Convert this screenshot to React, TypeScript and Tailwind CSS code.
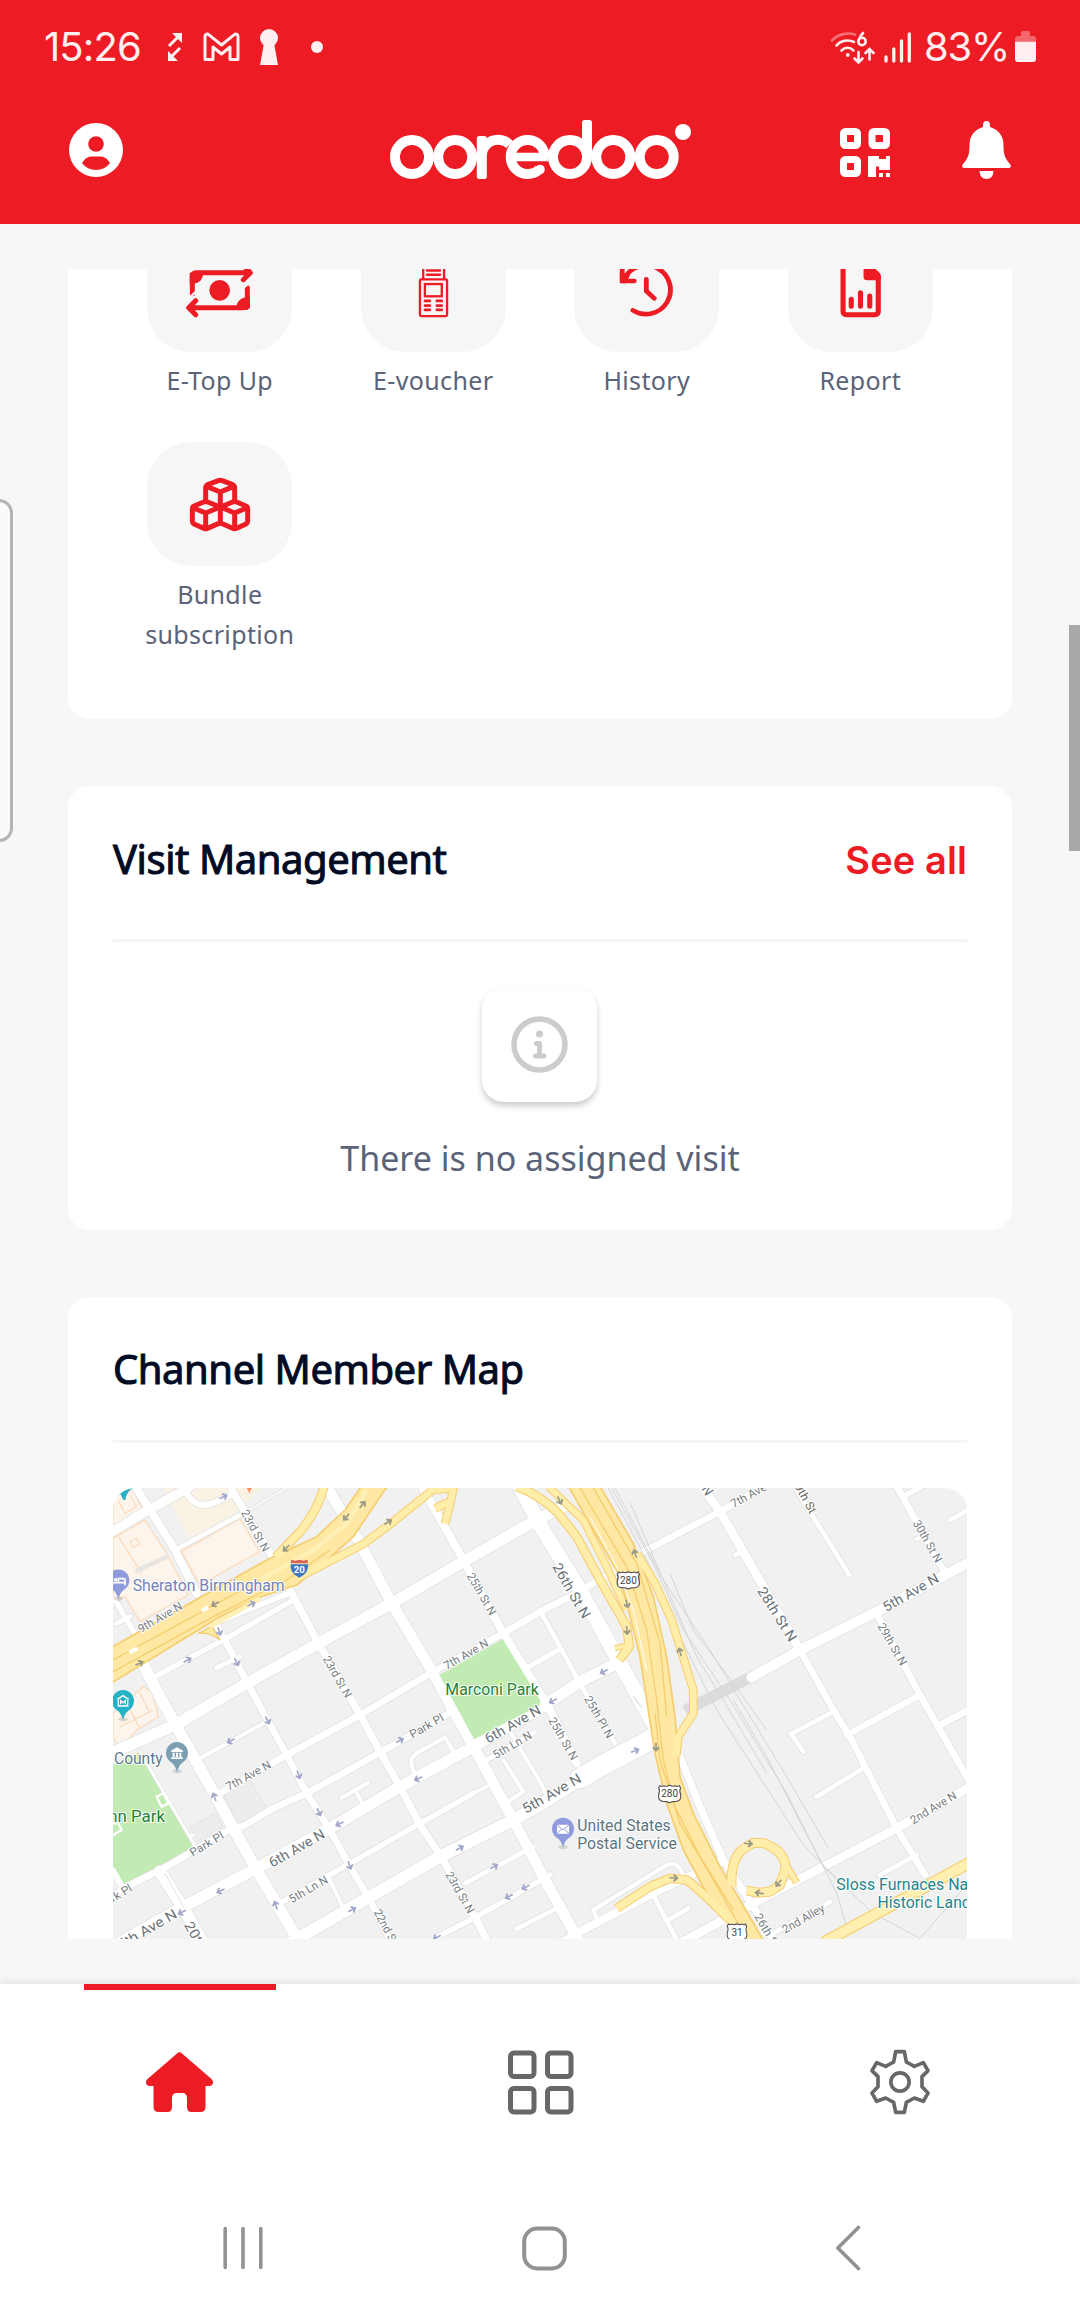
import React from "react";

const RED = "#ed1c24";

/* ---------- status bar ---------- */

function StatusBar() {
  return (
    <div className="flex h-[94px] items-center pl-[44px] pr-[44px] text-[#ffeff0]">
      <span className="w-[100px] whitespace-nowrap font-['Inter'] text-[40px] leading-[48px] tracking-[-0.900px]">15:26</span>
      <svg className="ml-[23px] h-[30px] w-[16px]" viewBox="0 0 16 30" fill="none" stroke="currentColor" strokeWidth="3">
        <path d="M2 14 11 5M13 16 4 25" />
        <path d="M5 1h10v10zM1 29V19l10 10z" fill="currentColor" stroke="none" />
      </svg>
      <svg className="ml-[20px] h-[30px] w-[37px]" viewBox="0 0 37 30" fill="none" stroke="currentColor" strokeWidth="3" strokeLinejoin="round">
        <path d="M2 4.500C2 2 4.500 1.500 6 2.800L18.500 13 31 2.800C32.500 1.500 35 2 35 4.500V27.500H27V15L18.500 22 10 15V27.500H2Z" />
      </svg>
      <svg className="ml-[19px] h-[36px] w-[20px]" viewBox="0 0 20 36" fill="currentColor">
        <circle cx="10" cy="9" r="9" />
        <path d="M5 14h10l4 22H1z" />
      </svg>
      <span className="ml-[32px] h-[12px] w-[12px] rounded-full bg-[#ffeff0]" />
      <svg className="ml-auto h-[33px] w-[45px]" viewBox="0 0 45 33" fill="none" stroke="currentColor" strokeWidth="2.600" strokeLinecap="round">
        <path d="M2 9.500C8 3 18 1 25 3.500" opacity="0.4" />
        <path d="M6.500 14.500C10.500 9.500 18 8 24 11M11.500 19.500c3.500-3.600 8.500-3.600 12 0" />
        <circle cx="17.800" cy="24" r="1.900" fill="currentColor" stroke="none" />
        <circle cx="32" cy="10.500" r="3.700" />
        <path d="M29 8.500Q30.500 4.500 33 2M28.500 21v10M24.500 27.500l4 4 4-4M39.500 28.500V18.500M35.500 22l4-4 4 4" />
      </svg>
      <svg className="ml-[9px] h-[33px] w-[28px]" viewBox="0 0 28 33" stroke="currentColor" strokeWidth="3.300" strokeLinecap="round">
        <path d="M2 26v4M9.800 18v12M17.500 10v20M25.300 3v27" />
      </svg>
      <span className="ml-[12px] w-[88px] whitespace-nowrap font-['Inter'] text-[40px] leading-[48px] tracking-[-1.200px]">83%</span>
      <svg className="ml-[3px] h-[32px] w-[21px]" viewBox="0 0 21 32" fill="currentColor">
        <path d="M0 10V8q0-3 3-3h3V2q0-2 2-2h5q2 0 2 2v3h3q3 0 3 3v2z" opacity="0.36" />
        <path d="M0 10.500h21V28q0 3-3 3H3q-3 0-3-3z" />
      </svg>
    </div>
  );
}

/* ---------- brand header ---------- */

function Logo() {
  return (
    <svg aria-label="ooredoo" className="h-[62px] w-[304px]" viewBox="388 119 304 62" fill="none" stroke="#fff" strokeWidth="10">
      <circle cx="412" cy="157" r="17" />
      <circle cx="455.200" cy="157" r="17" />
      <rect x="476.800" y="136" width="10" height="43" rx="2.500" fill="#fff" stroke="none" />
      <circle cx="498" cy="156" r="16.200" strokeDasharray="38 200" transform="rotate(180 498 156)" />
      <circle cx="527.700" cy="157" r="17" strokeDasharray="93 200" transform="rotate(47 527.700 157)" />
      <line x1="512" x2="548.300" y1="157" y2="157" strokeWidth="8.500" />
      <circle cx="540" cy="169.500" r="4.800" fill="#fff" stroke="none" />
      <circle cx="570" cy="157" r="17" />
      <rect x="582" y="120" width="10" height="38" rx="2.500" fill="#fff" stroke="none" />
      <circle cx="613.300" cy="157" r="17" />
      <circle cx="656.700" cy="157" r="17" />
      <circle cx="683" cy="132" r="8" fill="#fff" stroke="none" />
    </svg>
  );
}

function BrandBar() {
  return (
    <div className="flex h-[130px] pl-[69px] pr-[69px]">
      <svg className="mt-[29px] h-[54px] w-[54px]" viewBox="0 0 54 54">
        <circle cx="27" cy="27" r="27" fill="#fff" />
        <circle cx="27" cy="21" r="7.800" fill={RED} />
        <path d="M13 40q4-6.500 9-6.500h10q5 0 9 6.500-5 7-14 7t-14-7Z" fill={RED} />
      </svg>
      <div className="ml-[265px] mt-[25px]">
        <Logo />
      </div>
      <svg className="ml-auto mt-[34px] h-[49px] w-[50px]" viewBox="0 0 50 49" fill="none" stroke="#fff" strokeWidth="7">
        <rect x="3.500" y="3.500" width="14" height="14" rx="2" />
        <rect x="32" y="3.500" width="14.500" height="14" rx="2" />
        <rect x="3.500" y="31.500" width="14" height="14" rx="2" />
        <path d="M28 28h11v3h7v-3h4v14H39v-3.500h-3V49h-8zM39 45h4v4h-4zM46 45h4v4h-4z" fill="#fff" stroke="none" />
      </svg>
      <svg className="ml-[72px] mt-[27px] h-[58px] w-[49px]" viewBox="0 0 49 58" fill="#fff">
        <path d="M21 6V4a3.500 4 0 0 1 7 0V6C37 9 41.500 15 41.500 24C41.500 34 43 37 47.500 42.500C50.500 46 48 47 46 47H3C1 47-1.500 46 1.500 42.500C6 37 7.500 34 7.500 24C7.500 15 12 9 21 6Z" />
        <path d="M17.500 50h14q-.5 8-7 8t-7-8Z" />
      </svg>
    </div>
  );
}

/* ---------- shortcuts ---------- */

function TopUpIcon() {
  return (
    <svg className="h-full w-full" viewBox="261 -37 435 372" fill="none" stroke={RED} strokeWidth="15" strokeLinecap="round" strokeLinejoin="round">
      <path d="M397 160V109Q397 97 409 97H570M550 118 571 97 555 81M562 142V190Q562 202 550 202H388M407 181 386 202 407 223" />
      <path d="M389 97H430Q429 129 397 130H389ZM570 202V170Q528 170 528 209H562Z" fill={RED} stroke="none" />
      <path d="M385 176 406 155M548 146 571 124" stroke="#f6f6f6" strokeWidth="6" />
      <circle cx="479" cy="150" r="31" fill={RED} stroke="none" />
    </svg>
  );
}

function VoucherIcon() {
  return (
    <svg className="h-full w-full" viewBox="900 -37 438 372" fill="none" stroke={RED} strokeWidth="7" strokeLinecap="round">
      <path d="M1088 114V60H1151V114M1099 90H1139M1099 103H1139" />
      <rect x="1078" y="117" width="82" height="111" rx="4" />
      <rect x="1093" y="131" width="51" height="37" />
      <path d="M1093 182h15M1129 182h15M1093 196h15M1129 196h15M1093 209h15M1129 209h15" strokeWidth="8" />
    </svg>
  );
}

function HistoryIcon() {
  return (
    <svg className="h-full w-full" viewBox="99 -37 421 372" preserveAspectRatio="none" fill="none" stroke={RED} strokeWidth="14" strokeLinecap="round" strokeLinejoin="round">
      <path d="M270 210A71 73 0 1 0 247 111M309 117V152L332 174" />
      <path d="M239 75V122H274" />
      <path d="M232 95V129H250L262 104Z" fill={RED} stroke="none" />
    </svg>
  );
}

function ReportIcon() {
  return (
    <svg className="h-full w-full" viewBox="717 -37 424 372" preserveAspectRatio="none" fill="none" stroke={RED} strokeWidth="15" strokeLinecap="round">
      <path d="M950 76H878V213Q878 223 888 223H971Q981 223 981 213V110Q981 103 975 98L955 80" />
      <path d="M938 75H960L988 105V120H948Q938 120 938 110Z" fill={RED} stroke="none" />
      <path d="M902 177V198M929 157V198M956 167V198" />
    </svg>
  );
}

function CubesIcon() {
  return (
    <svg className="h-full w-full" viewBox="261 605 435 372" fill="none" stroke={RED} strokeWidth="15" strokeLinejoin="round">
      <path d="M437 785V742Q437 736 443 733L475 721Q481 718 487 721L518 733Q524 736 524 742V785M440 738 481 755 521 738M481 755V850" />
      <path d="M481 800 443 785Q437 783 431 785L402 797Q397 799 397 805V842Q397 848 402 851L432 864Q437 867 442 864L475 850Q481 847 487 850L518 864Q524 867 530 864L558 851Q563 848 563 842V805Q563 799 558 797L530 785Q524 783 518 785Z" />
      <path d="M400 803 437 818 481 800 524 818 560 803M437 818V864M524 818V864" />
    </svg>
  );
}

const shortcuts = [
  { label: "E-Top Up", Icon: TopUpIcon },
  { label: "E-voucher", Icon: VoucherIcon },
  { label: "History", Icon: HistoryIcon },
  { label: "Report", Icon: ReportIcon },
  { label: "Bundle subscription", Icon: CubesIcon },
];

function Shortcuts() {
  return (
    <section className="h-[450px] shrink-0 overflow-hidden rounded-b-[22px] bg-white px-[45px]">
      <div className="-mt-[41px] grid grid-cols-4 gap-y-[42px]">
        {shortcuts.map(({ label, Icon }) => (
          <div key={label} className="flex flex-col items-center">
            <div className="h-[124px] w-[145px] overflow-hidden rounded-[44px] bg-[#f6f6f6]">
              <Icon />
            </div>
            <p className="mt-2 w-[160px] text-center text-[25px] leading-[40px] tracking-[0.350px] text-[#5b6378]">{label}</p>
          </div>
        ))}
      </div>
    </section>
  );
}

/* ---------- visits ---------- */

function Title({ children }: { children: React.ReactNode }) {
  return (
    <h2 className="whitespace-nowrap text-[40px] font-normal leading-[54px] tracking-[-0.450px] text-[#020b24] [-webkit-text-stroke:1px_#020b24]">
      {children}
    </h2>
  );
}

function Visits() {
  return (
    <section className="mt-[67px] flex h-[444px] shrink-0 flex-col rounded-[22px] bg-white px-[45px] pt-[46px]">
      <div className="flex items-center justify-between">
        <Title>Visit Management</Title>
        <a className="pt-[3px] font-['Inter'] text-[38px] font-semibold leading-[51px] tracking-[0.100px] text-[#ed1c24]">See all</a>
      </div>
      <div className="mt-[53px] h-[3px] shrink-0 bg-[#f5f5f5]" />
      <div className="mr-[1px] mt-[45px] flex h-[115px] w-[115px] shrink-0 items-center justify-center self-center rounded-[22px] bg-white shadow-[0_4px_6px_rgba(0,0,0,0.2)]">
        <svg className="h-[57px] w-[57px]" viewBox="0 0 57 57" fill="none" stroke="#cccccc" strokeWidth="5.500" strokeLinecap="round" strokeLinejoin="round">
          <circle cx="28.500" cy="28.500" r="25.500" />
          <circle cx="28.500" cy="18" r="3.600" fill="#ccc" stroke="none" />
          <path d="M25.500 27.500h3v12M24.500 40h8.500" strokeWidth="5" />
        </svg>
      </div>
      <p className="mt-[33px] text-center text-[34px] leading-[46px] text-[#5b6378]">There is no assigned visit</p>
    </section>
  );
}

/* ---------- map ---------- */

type Road = [number, string];

const streets: Road[] = [
  [28, "M20 195 148 118 250 62 330 10"],
  [14, "M225 240 420 135"],
  [5, "M420 135 560 54"],
  [18, "M255 62Q280 105 310 105 340 105 400 70"],
  [34, "M20 855 225 765 345 695 440 640 655 520 875 400 1090 275 1300 155 1390 110"],
  [20, "M350 975 560 855 780 735 1000 605 1210 490 1330 420 1430 370 1530 310 1630 245 1860 125 2000 45"],
  [20, "M20 1290 80 1250 200 1190 395 1075 430 1068 520 1015 620 970 840 848 1050 728"],
  [16, "M1270 600 1375 540"],
  [34, "M20 1440 250 1310 470 1195 690 1075 900 950 1120 830 1320 715 1440 635 1560 575"],
  [16, "M530 1305 750 1180 960 1060 1120 970"],
  [10, "M1115 972 1180 940"],
  [12, "M685 1220 735 1325"],
  [14, "M1160 870 1305 785"],
  [36, "M560 1425 810 1280 1020 1160 1240 1050 1320 1005 1440 930 1650 815"],
  [60, "M1440 925 1500 890 1660 805"],
  [30, "M1955 622 2100 540 2340 420 2620 270"],
  [16, "M1000 1407 1130 1340 1350 1215"],
  [14, "M1095 1240 1300 1130"],
  [14, "M1250 1377 1390 1305"],
  [24, "M1380 1420 1440 1385 1650 1275 1860 1175"],
  [26, "M1740 1420 1960 1300 2180 1185 2390 1075 2620 945"],
  [14, "M2020 1390 2190 1295"],
  [14, "M2110 845 2073 792 2200 725"],
  [14, "M2150 980 2290 895"],
  [14, "M2340 1215 2450 1155"],
  [18, "M2240 795 2460 675"],
  [20, "M2520 765 2620 712"],
  [24, "M100 40 150 120 225 240 290 370"],
  [20, "M345 455 440 635 560 855 620 970 690 1080 750 1190 810 1290 875 1420"],
  [34, "M125 575 180 680 230 770 345 975 400 1075 470 1200 600 1420"],
  [16, "M45 390 110 500"],
  [14, "M50 460 90 440"],
  [8, "M120 845 285 1128"],
  [36, "M180 1205 250 1315 310 1420"],
  [22, "M395 60 520 265"],
  [22, "M565 350 655 520 775 725 840 845 900 950 960 1065 1030 1170 1130 1350 1165 1420"],
  [32, "M675 40 780 220 875 400 1000 610 1120 830 1240 1050 1330 1220 1440 1420"],
  [24, "M960 40 1090 270 1210 490 1290 620 1345 710 1430 880"],
  [12, "M1230 785 1320 935 1345 985"],
  [12, "M1210 870 1270 965 1225 995"],
  [14, "M1325 430 1440 640 1545 820"],
  [44, "M1250 30 1320 165 1440 360 1560 580 1660 760"],
  [22, "M1740 860 1800 1010 1870 1170 1960 1310 2030 1425"],
  [26, "M1800 40 1860 125 2100 540"],
  [20, "M2100 540 2200 720 2250 800 2390 1075 2475 1215"],
  [14, "M2090 60 2248 315"],
  [20, "M2330 430 2460 675 2620 955"],
  [20, "M2385 40 2530 300"],
  [16, "M2410 80 2500 30"],
  [14, "M2550 150 2620 112"],
  [14, "M1905 255 1925 245"],
  [12, "M2450 207 2462 203"],
  [16, "M165 620 370 510 580 390"],
  [14, "M350 593 420 560"],
  [16, "M355 455 570 368"],
  [12, "M300 865 505 752"],
  [12, "M945 910Q920 870 950 850L1035 802 1062 848"],
  [12, "M725 983 805 938M765 960 790 1005"],
  [12, "M1490 1345 1480 1320 1700 1185Q1735 1170 1750 1220"],
  [14, "M1660 1275 1735 1420M1705 1350 1765 1315"],
];

const highways: Road[] = [
  [22, "M527 262 600 185Q655 120 675 40"],
  [20, "M600 320 790 222 880 155 1010 50M985 60 1060 55 1052 95 1035 160M1005 115 1050 95"],
  [22, "M1250 50Q1320 75 1375 130L1430 200 1500 330 1580 470 1588 530 1558 570"],
  [12, "M1545 535 1585 525"],
  [18, "M1345 50 1450 150 1520 290 1580 420"],
  [20, "M1610 250 1665 340 1715 450 1780 660 1780 730 1735 800 1728 860"],
  [24, "M1895 1250Q1890 1175 1925 1140L1960 1118 1995 1120 2030 1140Q2062 1170 2055 1200L2040 1245 2010 1265 1975 1268 1940 1262"],
  [16, "M2058 1185 2090 1238"],
  [22, "M1550 1315 1650 1250 1710 1225 1760 1230Q1790 1250 1900 1360"],
];

const I20 = "M20 540 500 270 650 200 735 120 790 40H868L760 200 660 290 590 345 470 385 360 440 20 648Z";
const US280 =
  "M1400 40 1480 180 1560 320 1620 560 1640 690 1665 850 1700 1000 1750 1140 1820 1270 1880 1350 1930 1420H1995L1920 1290 1860 1190 1780 1030 1740 920 1725 740 1700 560 1660 380 1600 220 1495 40Z";

const laneLines =
  "M39 570 480 330 640 240 710 190M39 605 340 440 560 330 690 240M1440 54 1580 290 1640 480 1670 690 1690 870 1725 1010 1800 1160 1900 1320M1480 54 1610 280 1680 520 1700 740M1665 730 1680 870 1740 1060 1840 1230 1940 1405";

const rails =
  "M1525 54 1640 270 1730 480 1850 720 2110 1125 2235 1250M1535 54 1665 290 1750 480 1890 690 2060 970 2170 1190M1545 54 1690 330 1830 540 1920 690 2060 920 2185 1135M1590 98 1660 260 1790 560 1870 690 2000 910M1710 310 1780 480 1900 640 2000 780M1900 690 2000 860 2170 1190 2210 1270 2240 1370M2170 1190 2320 1330 2460 1405 2600 1245";

type LabelProps = {
  x: number;
  y: number;
  w: number;
  size?: number;
  rot?: number;
  fill?: string;
  children: string;
};

function Label({ x, y, w, size = 35, rot = 0, fill = "#767c81", children }: LabelProps) {
  return (
    <text
      x={x}
      y={y}
      transform={`rotate(${rot} ${x} ${y})`}
      fontSize={size}
      textLength={w}
      lengthAdjust="spacingAndGlyphs"
      fill={fill}
      stroke="#fff"
      strokeWidth="6"
      strokeLinejoin="round"
      paintOrder="stroke"
      textAnchor="middle"
      dominantBaseline="central"
    >
      {children}
    </text>
  );
}

const streetLabels: LabelProps[] = [
  { x: 466, y: 182, w: 138, rot: 61, children: "23rd St N" },
  { x: 180, y: 442, w: 148, rot: -30, children: "9th Ave N" },
  { x: 712, y: 620, w: 138, rot: 60, children: "23rd St N" },
  { x: 1145, y: 372, w: 140, rot: 60, children: "25th St N" },
  { x: 1098, y: 553, w: 148, rot: -30, children: "7th Ave N" },
  { x: 445, y: 917, w: 148, rot: -29, children: "7th Ave N" },
  { x: 980, y: 768, w: 112, rot: -30, children: "Park Pl" },
  { x: 320, y: 1122, w: 112, rot: -31, children: "Park Pl" },
  { x: 45, y: 1280, w: 112, rot: -31, children: "Park Pl" },
  { x: 625, y: 1258, w: 128, rot: -30, children: "5th Ln N" },
  { x: 1237, y: 825, w: 128, rot: -30, children: "5th Ln N" },
  { x: 1080, y: 1267, w: 138, rot: 60, children: "23rd St N" },
  { x: 865, y: 1385, w: 146, rot: 62, children: "22nd St N" },
  { x: 1390, y: 806, w: 142, rot: 60, children: "25th St N" },
  { x: 1497, y: 741, w: 140, rot: 60, children: "25th Pl N" },
  { x: 1960, y: 68, w: 150, rot: -29, children: "7th Ave N" },
  { x: 2112, y: 76, w: 118, rot: 61, fill: "#6b665a", children: "29th St" },
  { x: 2483, y: 214, w: 140, rot: 60, children: "30th St N" },
  { x: 2377, y: 523, w: 140, rot: 60, children: "29th St N" },
  { x: 2500, y: 1013, w: 155, rot: -31, children: "2nd Ave N" },
  { x: 2110, y: 1346, w: 140, rot: -30, children: "2nd Alley" },
  { x: 2010, y: 1398, w: 150, rot: 60, children: "26th St N" },
  { x: 590, y: 1134, w: 186, size: 42, rot: -30, fill: "#6a7379", children: "6th Ave N" },
  { x: 1238, y: 762, w: 186, size: 42, rot: -30, fill: "#6a7379", children: "6th Ave N" },
  { x: 1355, y: 970, w: 196, size: 42, rot: -30, fill: "#6a7379", children: "5th Ave N" },
  { x: 2432, y: 367, w: 186, size: 42, rot: -30, fill: "#6a7379", children: "5th Ave N" },
  { x: 140, y: 1378, w: 200, size: 42, rot: -30, fill: "#6a7379", children: "5th Ave N" },
  { x: 1415, y: 362, w: 184, size: 42, rot: 60, fill: "#6a7379", children: "26th St N" },
  { x: 2032, y: 432, w: 184, size: 42, rot: 58, fill: "#6a7379", children: "28th St N" },
  { x: 1823, y: 60, w: 28, size: 42, rot: 58, fill: "#6a7379", children: "N" },
  { x: 312, y: 1440, w: 190, size: 42, rot: 60, fill: "#6a7379", children: "20th St N" },
];

const arrows: [number, number, number, string][] = [
  [371, 80, -25, "#a3a8c8"], [788, 103, -50, "#9b9a86"], [738, 142, 132, "#9b9a86"], [865, 156, -32, "#9b9a86"],
  [558, 235, 135, "#9b9a86"], [345, 402, 152, "#9b9a86"], [455, 402, -25, "#a3a8c8"], [119, 580, -25, "#9b9a86"],
  [263, 570, -28, "#a3a8c8"], [358, 485, 70, "#a3a8c8"], [410, 577, 62, "#a3a8c8"], [503, 752, 62, "#a3a8c8"],
  [392, 813, 152, "#a3a8c8"], [596, 915, 70, "#a3a8c8"], [657, 1027, 65, "#a3a8c8"], [343, 980, -110, "#a3a8c8"],
  [900, 811, -28, "#a3a8c8"], [954, 926, 155, "#a3a8c8"], [718, 1062, 155, "#a3a8c8"], [749, 1187, 70, "#a3a8c8"],
  [361, 1263, 155, "#a3a8c8"], [245, 1327, 155, "#a3a8c8"], [527, 1305, -110, "#a3a8c8"], [757, 1319, -28, "#a3a8c8"],
  [1080, 1134, -28, "#a3a8c8"], [1183, 1190, -28, "#a3a8c8"], [1226, 1280, 152, "#a3a8c8"], [1276, 1252, 152, "#a3a8c8"],
  [1010, 1402, 152, "#a3a8c8"], [1379, 92, 65, "#9b9a86"], [1605, 250, -110, "#9b9a86"], [1581, 402, 75, "#9b9a86"],
  [1581, 482, 85, "#9b9a86"], [1740, 545, -105, "#9b9a86"], [1511, 605, 152, "#a3a8c8"], [1358, 693, 152, "#a3a8c8"],
  [1606, 842, -20, "#a3a8c8"], [1668, 832, 90, "#9b9a86"], [1946, 1121, 5, "#9b9a86"], [2035, 1240, 128, "#9b9a86"],
  [1977, 1269, -170, "#9b9a86"], [1722, 1224, 3, "#9b9a86"],
];

function Shield({ x, y, w, children }: { x: number; y: number; w: number; children: string }) {
  return (
    <g transform={`translate(${x} ${y})`}>
      <g transform={`scale(${w / 68} 1)`}>
        <path
          d="M-29-24Q-24-20-17-24-8-20 0-25 8-20 17-24 24-20 29-24L33-17Q28-9 33 2 36 22 20 23 8 23 0 27-8 23-20 23-36 22-33 2-28-9-33-17Z"
          fill="#fff"
          stroke="#55555a"
          strokeWidth="3.500"
        />
      </g>
      <text textAnchor="middle" y="11" fontSize="30" fill="#444">{children}</text>
    </g>
  );
}

function Pin({ x, y, color, children }: { x: number; y: number; color: string; children?: React.ReactNode }) {
  return (
    <g transform={`translate(${x} ${y})`}>
      <ellipse cx="0" cy="54" rx="14" ry="6" fill="#000" opacity="0.12" />
      <path d="M0 56Q-4 38-16 28A33 33 0 1 1 16 28Q4 38 0 56Z" fill={color} />
      {children}
    </g>
  );
}

function MapView() {
  return (
    <svg className="h-[451px] w-[854px] shrink-0 rounded-t-[22px] font-['Roboto']" viewBox="39 54 2562 1353">
      <rect x="39" y="54" width="2562" height="1353" fill="#f1f1f1" />

      {/* buildings */}
      <path d="M190 54H480L420 120 270 210Z" fill="#faf3e3" />
      <g fill="#fdf4ec" stroke="#fbdcbf" strokeWidth="4">
        <path d="M245 245 420 145 478 245 300 345Z" />
        <path d="M39 80 100 60 130 125 39 175Z" />
        <path d="M39 205 135 150 200 250 265 375 120 455 75 380 39 390Z" />
        <path d="M55 200 125 310M110 300 200 260M55 90 75 130 110 110 90 75M90 215 110 205 120 222 100 232Z" fill="none" />
        <path d="M39 730 130 650 155 665 175 740 110 780 60 835 39 800Z" />
        <path d="M90 720 120 775M60 770 160 720M120 670 150 730" fill="none" />
      </g>
      <path d="M105 305 205 258" stroke="#e8e4e0" strokeWidth="14" />
      <path d="M370 970 450 930 500 1015 415 1060ZM270 1070 345 1030 368 1070 290 1115Z" fill="#ededed" stroke="#e3e3e3" strokeWidth="3" />

      {/* parks */}
      <path d="M39 885 120 845 285 1130 65 1250 39 1205Z" fill="#c2ebb3" />

      {/* streets */}
      <path d="M1755 722 1965 615" stroke="#dcdcdc" strokeWidth="34" />
      <g fill="none" strokeLinecap="round" strokeLinejoin="round">
        {streets.map(([w, d], i) => (
          <path key={i} d={d} stroke="#e3e3e3" strokeWidth={w + 5} />
        ))}
        {streets.map(([w, d], i) => (
          <path key={i} d={d} stroke="#fff" strokeWidth={w} />
        ))}
        <path d="M170 980 190 970 205 1000 185 1010ZM39 1060 55 1060 65 1080 39 1095M272 1100 280 1095" stroke="#fff" strokeWidth="7" />
        <path d="M39 1200 75 1265" stroke="#fff" strokeWidth="16" />
        <path d="M195 1210 250 1310" stroke="#e3e3e3" strokeWidth="3" />
        <path d="M1600 680 1625 712" stroke="#d8cfc8" strokeWidth="3" />
      </g>
      <path d="M1018 615 1208 507 1320 690V705L1122 808Z" fill="#c2ebb3" />

      <path d={rails} fill="none" stroke="#d2d5d9" strokeWidth="3" />

      {/* highways */}
      <g fill="none" strokeLinecap="butt" strokeLinejoin="round">
        <path d="M2170 1418 2620 1172" stroke="#f5cd6e" strokeWidth="36" />
        <path d="M2170 1418 2620 1172" stroke="#ffefb0" strokeWidth="29" />
        <path d="M295 490Q330 485 360 510L335 470Z" fill="#ffeca6" stroke="#f5cd6e" strokeWidth="4" />
        {highways.map(([w, d], i) => (
          <path key={i} d={d} stroke="#f5cd6e" strokeWidth={w + 6} />
        ))}
        <path d={I20} fill="#fee8a3" stroke="#f5cd6e" strokeWidth="5" />
        <path d={US280} fill="#fee8a3" stroke="#f5cd6e" strokeWidth="5" />
        {highways.map(([w, d], i) => (
          <path key={i} d={d} stroke="#ffedaa" strokeWidth={w} />
        ))}
        <path d={laneLines} stroke="#f5cd6e" strokeWidth="4" />
        <path d="M480 330 640 240 740 160 800 60M330 470 480 385" stroke="#fff0b5" strokeWidth="14" />
        <path d="M88 547 112 535M305 422 325 412" stroke="#fff" strokeWidth="12" />
        <path d="M1470 140 1550 290 1600 420 1640 600" stroke="#fff" strokeWidth="3" />
      </g>

      {arrows.map(([x, y, r, c], i) => (
        <path key={i} transform={`translate(${x} ${y}) rotate(${r})`} d="M-14-2.500H2L-3-9 2-11 14 0 2 11-3 9 2 2.500H-14Z" fill={c} />
      ))}

      {streetLabels.map((l, i) => (
        <Label key={i} {...l} />
      ))}

      {/* places */}
      <path d="M60 70Q75 55 100 54 80 62 76 90H70Z" fill="#25b2c6" />
      <path d="M440 54H456Q449 62 448 72 446 62 440 54Z" fill="#fc9160" />
      <Pin x={55} y={332} color="#8f9bdd">
        <path d="M-18-8V14M-18 6H20V-4Q20-6 16-6H0V4M20 4V14" stroke="#fff" strokeWidth="5" fill="none" />
        <circle cx="-8" cy="-3" r="5" fill="#fff" />
      </Pin>
      <Pin x={69} y={694} color="#25b2c6">
        <path d="M-17-6 0-17 17-6M-14-4V14H14V-4M-7 9V-2L0 4 7-2V9" stroke="#fff" strokeWidth="4" fill="none" />
      </Pin>
      <Pin x={231} y={850} color="#7d9fb2">
        <path d="M-18-8 0-18 18-8V-4H-18ZM-13-2h6v13h-6zM-3-2h6v13h-6zM7-2h6v13H7zM-17 12h34v5h-34z" fill="#fff" />
      </Pin>
      <Pin x={1389} y={1077} color="#8f9bdd">
        <rect x="-18" y="-13" width="36" height="27" rx="3" fill="#fff" />
        <path d="M-17-11 0 3 17-11M-17 13-5 1M17 13 5 1" stroke="#8f9bdd" strokeWidth="3" fill="none" />
      </Pin>
      <Label x={326} y={347} w={456} size={47} fill="#7681b5">Sheraton Birmingham</Label>
      <Label x={1176} y={657} w={280} size={47} fill="#278033">Marconi Park</Label>
      <Label x={115} y={866} w={146} size={47} fill="#5b7a8c">County</Label>
      <Label x={90} y={1038} w={210} size={47} fill="#278033">Linn Park</Label>
      <Label x={1572} y={1067} w={280} size={47} fill="#5a7480">United States</Label>
      <Label x={1581} y={1119} w={299} size={47} fill="#5a7480">Postal Service</Label>
      <Label x={2466} y={1244} w={514} size={47} fill="#1d858c">Sloss Furnaces National</Label>
      <Label x={2526} y={1297} w={387} size={47} fill="#1d858c">Historic Landmark</Label>

      <g transform="translate(598 295)">
        <path d="M-26-12H26Q30 14 0 28-30 14-26-12Z" fill="#3c78c3" />
        <path d="M-24-26-12-23 0-26 12-23 24-26 26-15H-26Z" fill="#d9605c" />
        <text textAnchor="middle" y="14" fontSize="29" fontWeight="700" fill="#fff">20</text>
      </g>
      <Shield x={1585} y={330} w={68}>280</Shield>
      <Shield x={1709} y={971} w={68}>280</Shield>
      <Shield x={1911} y={1386} w={60}>31</Shield>
    </svg>
  );
}

function ChannelMap() {
  return (
    <section className="mt-[67px] flex h-[760px] shrink-0 flex-col rounded-[22px] bg-white px-[45px] pt-[45px]">
      <Title>Channel Member Map</Title>
      <div className="mt-[44px] h-[3px] shrink-0 bg-[#f5f5f5]" />
      <div className="mt-[45px]">
        <MapView />
      </div>
    </section>
  );
}

/* ---------- bottom bars ---------- */

function TabBar() {
  return (
    <nav className="relative grid h-[196px] grid-cols-3 place-items-center bg-white shadow-[0_-2px_8px_rgba(0,0,0,0.09)]">
      <span className="absolute left-[84px] top-0 h-[6px] w-[192px] bg-[#ed1c24]" />
      <svg className="mr-[2px] h-[60px] w-[67px]" viewBox="0 0 67 60" fill={RED}>
        <path d="M31 1.500Q33.500-1 36 1.500L65.500 27Q67.500 29 66.800 31.500 66.200 34 63 34H59.500V55Q59.500 60 54.500 60H45.500Q41 60 41 55V46.500Q41 41 36.500 41H30.500Q26 41 26 46.500V55Q26 60 21.500 60H12.500Q7.500 60 7.500 55V34H4Q.8 34 .2 31.500-.5 29 1.500 27Z" />
      </svg>
      <svg className="h-[65px] w-[67px]" viewBox="0 0 67 65" fill="none" stroke="#676767" strokeWidth="5">
        <rect x="3.500" y="3" width="23.500" height="23.500" rx="3.500" />
        <rect x="40.500" y="3" width="23.500" height="23.500" rx="3.500" />
        <rect x="3.500" y="38.500" width="23.500" height="23.500" rx="3.500" />
        <rect x="40.500" y="38.500" width="23.500" height="23.500" rx="3.500" />
      </svg>
      <svg className="h-[66px] w-[66px]" viewBox="21 39 198 198" fill="none" stroke="#676767" strokeWidth="11" strokeLinejoin="round">
        <path d="M107 47H133L139 78 163 91 190 80 204 104 186 122V152L204 171 190 196 163 186 139 199 133 229H107L101 199 77 186 50 196 36 171 54 152V122L36 104 50 80 77 91 101 78Z" />
        <circle cx="120" cy="138" r="27.500" />
      </svg>
    </nav>
  );
}

function SystemBar() {
  return (
    <div className="relative flex h-[136px] items-center bg-white">
      <svg className="ml-[223px] h-[44px] w-[40px]" viewBox="0 0 40 44" stroke="#929292" strokeWidth="3.600" strokeLinecap="round">
        <path d="M2.200 2.500v39M20 2.500v39M37.800 2.500v39" />
      </svg>
      <svg className="ml-[259px] h-[45px] w-[45px]" viewBox="0 0 45 45" fill="none" stroke="#929292" strokeWidth="4">
        <rect x="2.200" y="2.500" width="40.600" height="40" rx="13" />
      </svg>
      <svg className="ml-[268px] h-[46px] w-[26px]" viewBox="0 0 26 46" fill="none" stroke="#929292" strokeWidth="3.600" strokeLinecap="round" strokeLinejoin="round">
        <path d="M23.500 2.500 2.800 23 23.500 43.500" />
      </svg>
    </div>
  );
}

export default function App() {
  return (
    <div className="relative flex h-[2316px] w-[1080px] flex-col overflow-hidden bg-[#f7f7f7] font-['Noto_Sans',sans-serif]">
      <header className="h-[224px] shrink-0 bg-[#ed1c24]">
        <StatusBar />
        <BrandBar />
      </header>
      <main className="mt-[45px] flex h-[1670px] shrink-0 flex-col overflow-hidden px-[68px]">
        <Shortcuts />
        <Visits />
        <ChannelMap />
      </main>
      <footer className="mt-[45px] shrink-0">
        <TabBar />
        <SystemBar />
      </footer>
      <span className="absolute -left-[20px] top-[499px] h-[343px] w-[33px] rounded-[14px] border-[3px] border-[#b4b4b4] bg-[#fafafa]" />
      <span className="absolute right-0 top-[625px] h-[226px] w-[11px] bg-[#a9a9a9]" />
    </div>
  );
}
